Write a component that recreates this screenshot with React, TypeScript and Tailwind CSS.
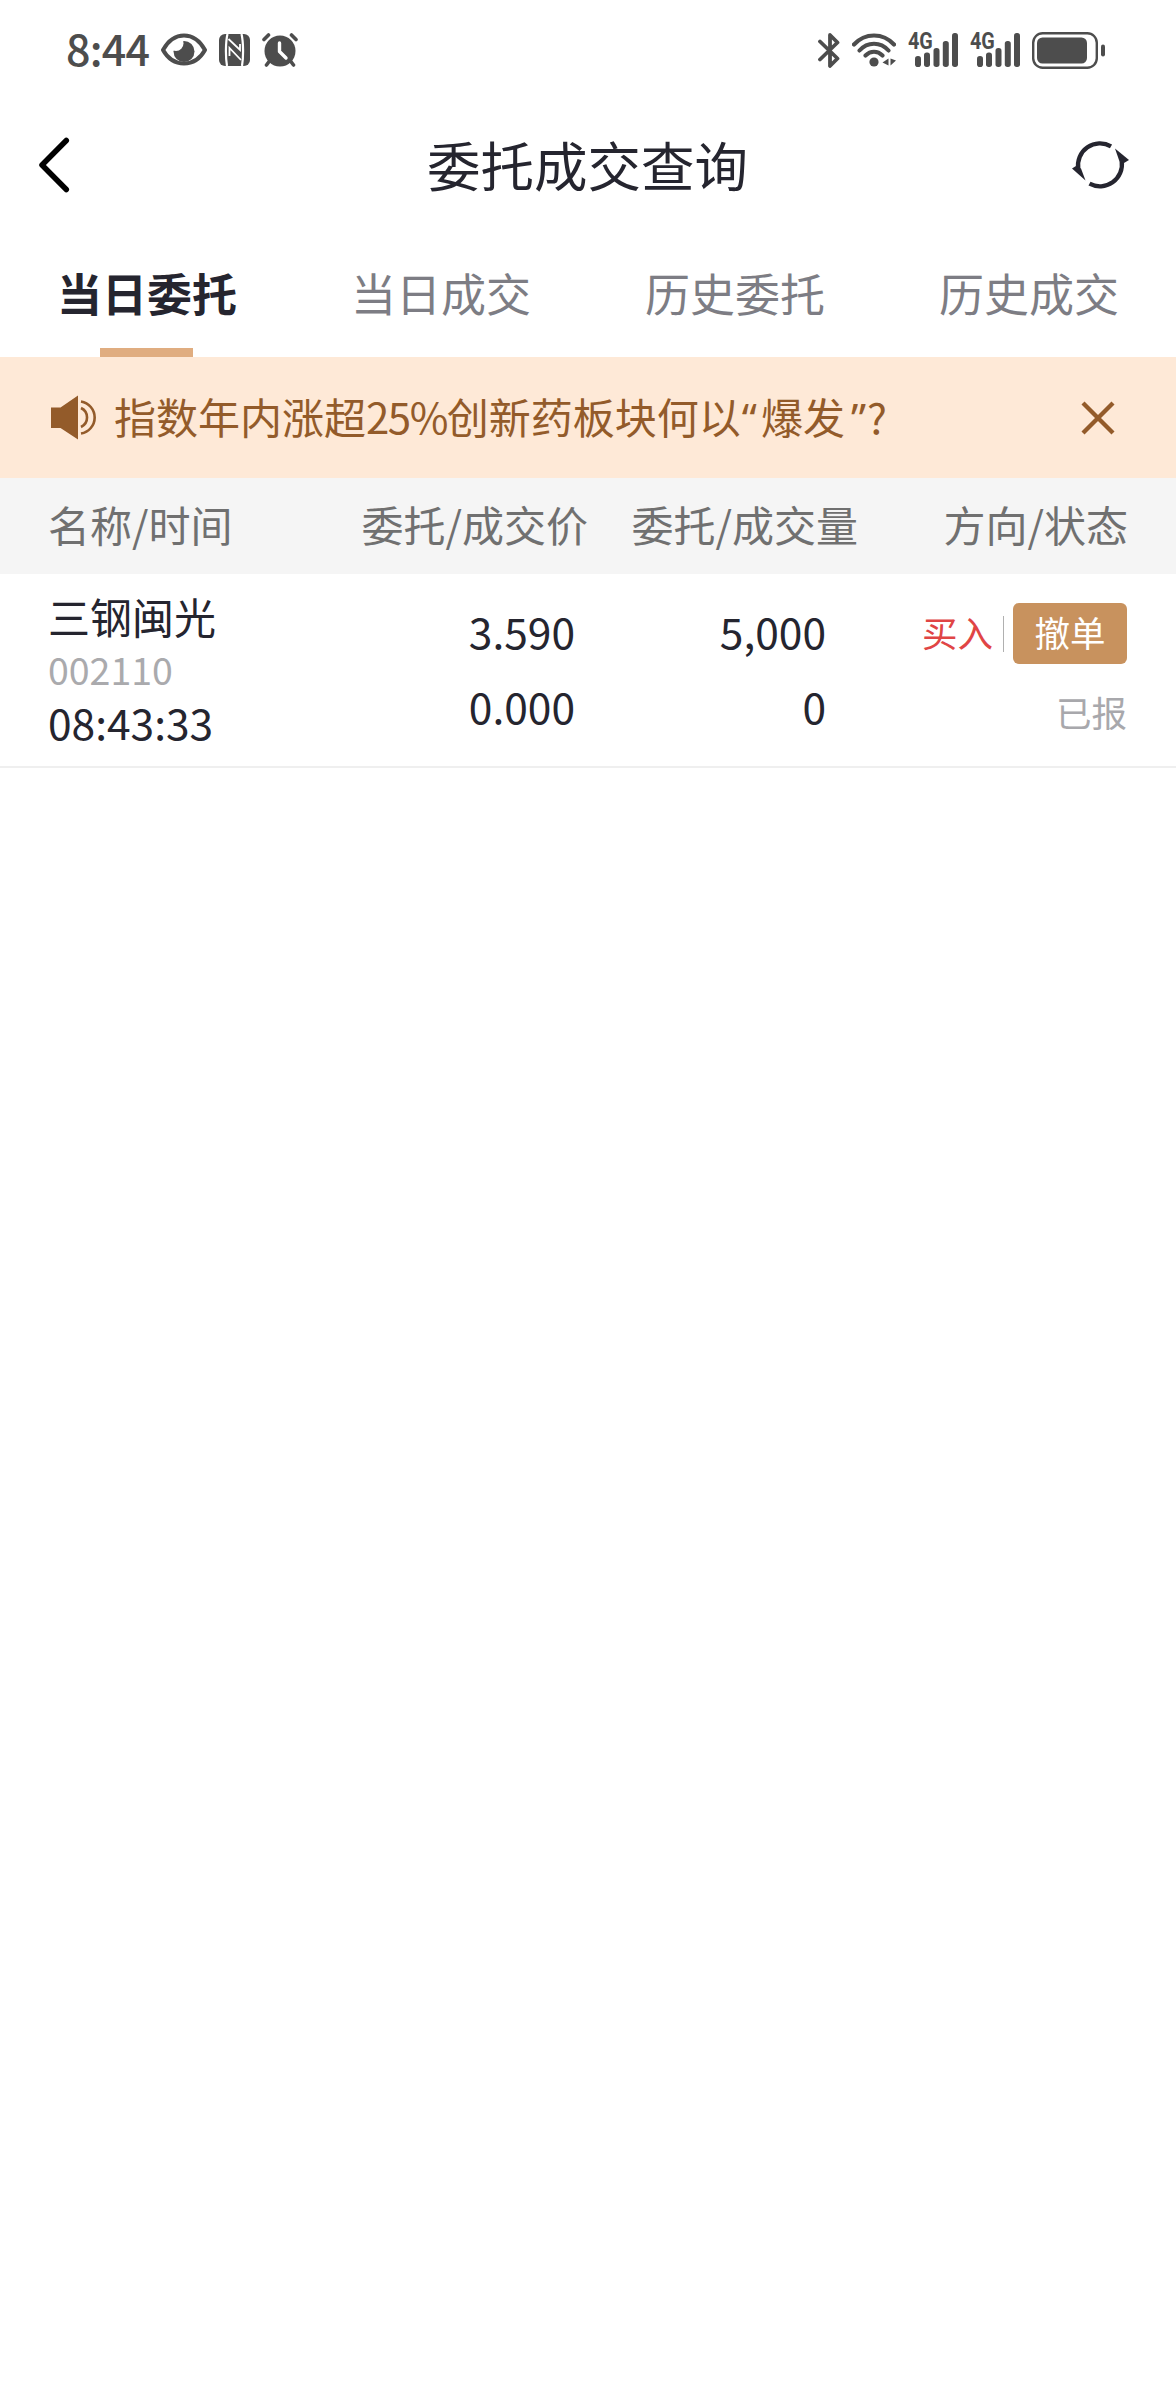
const tabs = ["当日委托", "当日成交", "历史委托", "历史成交"];

function EyeIcon() {
  return (
    <svg width="46" height="34" viewBox="0 0 46 34" fill="none">
      <circle cx="23" cy="18.500" r="10.500" fill="#4d4d4d" />
      <circle cx="15" cy="10.500" r="7.500" fill="#fff" />
      <path
        d="M2 17C7 8 14 2.500 23 2.500S39 8 44 17C39 26 32 30.500 23 30.500S7 26 2 17Z"
        stroke="#4d4d4d"
        strokeWidth="4"
        strokeLinejoin="round"
      />
    </svg>
  );
}

function NfcIcon() {
  return (
    <svg width="31" height="32" viewBox="0 0 31 32">
      <rect width="31" height="32" rx="6" fill="#4d4d4d" />
      <path d="M8.500 0C6.500 8 6.500 24 8 32" stroke="#fff" strokeWidth="2.200" fill="none" />
      <path d="M22.500 0C24.500 8 24.500 24 23 32" stroke="#fff" strokeWidth="2.200" fill="none" />
      <path d="M9.500 5L21 16V10M10.500 22V14L22 26" stroke="#fff" strokeWidth="1.800" fill="none" />
    </svg>
  );
}

function AlarmIcon() {
  return (
    <svg width="36" height="34" viewBox="0 0 36 34" fill="none" strokeLinecap="round">
      <circle cx="18" cy="18" r="15.500" fill="#4d4d4d" />
      <path d="M0 9L9 0M36 9L27 0" stroke="#fff" strokeWidth="3" />
      <path d="M2 6.500L6.500 2M34 6.500L29.500 2M7.500 28L4.500 32M28.500 28L31.500 32" stroke="#4d4d4d" strokeWidth="3.600" />
      <path d="M17.500 10V18.500L24 25" stroke="#fff" strokeWidth="3.400" strokeLinejoin="round" />
    </svg>
  );
}

function BluetoothIcon() {
  return (
    <svg width="22" height="35" viewBox="0 0 22 35" fill="none">
      <path
        d="M2 8.500L19.500 25.500L12 33V2L19.500 9.500L2 26.500"
        stroke="#4d4d4d"
        strokeWidth="3.800"
        strokeLinecap="round"
        strokeLinejoin="round"
      />
    </svg>
  );
}

function WifiIcon() {
  return (
    <svg width="44" height="34" viewBox="0 0 44 34" fill="none">
      <path
        d="M2 11.500C13 -0.500 31 -0.500 42 11.500M7.500 17.500C15.500 8.500 28.500 8.500 36.500 17.500M13.500 22.500C18.500 17.500 25.500 17.500 30.500 22.500"
        stroke="#4d4d4d"
        strokeWidth="4.100"
        strokeLinecap="round"
      />
      <circle cx="22" cy="29" r="4.600" fill="#4d4d4d" />
      <path d="M36.500 25.500V32.500L30.500 29.500ZM38.500 25.500V32.500L44 27.500Z" fill="#4d4d4d" />
    </svg>
  );
}

function SignalIcon() {
  return (
    <div className="relative h-[34px] w-[50px]">
      <span className="absolute top-0 left-0 origin-left scale-x-[0.86] font-['Roboto'] text-[23px] leading-[18px] font-bold text-[#4d4d4d]">
        4G
      </span>
      <svg width="50" height="34" viewBox="0 0 50 34" fill="#4d4d4d">
        <rect x="7" y="23" width="6" height="11" rx="2.800" />
        <rect x="16" y="19.500" width="6" height="14.500" rx="2.700" />
        <rect x="25.500" y="15" width="6" height="19" rx="2.700" />
        <rect x="34.800" y="8" width="6" height="26" rx="2.700" />
        <rect x="44" y="0" width="6" height="34" rx="2.700" />
      </svg>
    </div>
  );
}

function BatteryIcon() {
  return (
    <svg width="73" height="37" viewBox="0 0 73 37" fill="none">
      <rect x="1.200" y="1.200" width="63.600" height="34.600" rx="9.500" stroke="#4d4d4d" strokeWidth="2.400" />
      <rect x="5" y="5.500" width="50" height="26" rx="5.500" fill="#4d4d4d" />
      <rect x="69" y="12.500" width="4" height="12" rx="2" fill="#4d4d4d" />
    </svg>
  );
}

function StatusBar() {
  return (
    <div className="flex h-[100px] items-center pr-[71px] pl-[66px]">
      <span className="mb-1.5 w-[95px] text-[43px] leading-none font-medium tracking-[-0.8px] text-[#4d4d4d]">8:44</span>
      <EyeIcon />
      <div className="ml-3">
        <NfcIcon />
      </div>
      <div className="ml-3">
        <AlarmIcon />
      </div>
      <div className="ml-auto flex items-center">
        <BluetoothIcon />
        <div className="ml-3">
          <WifiIcon />
        </div>
        <div className="ml-3">
          <SignalIcon />
        </div>
        <div className="ml-3">
          <SignalIcon />
        </div>
        <div className="ml-3">
          <BatteryIcon />
        </div>
      </div>
    </div>
  );
}

function Header() {
  return (
    <header className="flex h-[130px] items-center justify-between pr-[46px] pl-[34px]">
      <button className="w-[71px]">
        <svg width="40" height="60" viewBox="0 0 40 60" fill="none">
          <path d="M32.300 5.500L8 30L32.300 54.500" stroke="#000" strokeWidth="5.500" strokeLinecap="round" strokeLinejoin="round" />
        </svg>
      </button>
      <h1 className="mb-[3px] text-[53.5px] leading-none">委托成交查询</h1>
      <button>
        <svg width="60" height="52" viewBox="0 0 60 52" fill="none">
          <path d="M41 7.300A22 22 0 0 0 8.300 30" stroke="#25252f" strokeWidth="4.300" />
          <path d="M51.700 22A22 22 0 0 1 19.500 44.700" stroke="#25252f" strokeWidth="4.300" />
          <path d="M45 9.500L59 21L54 24L49.500 22.500Z" fill="#25252f" />
          <path d="M15.500 41.500L2 29.500L6 27L11 29.500Z" fill="#25252f" />
        </svg>
      </button>
    </header>
  );
}

function Tabs() {
  return (
    <nav className="grid h-[127px] grid-cols-4">
      {tabs.map((tab, i) => (
        <button key={tab} className="flex flex-col items-center pt-[31px]">
          <span className={i === 0 ? "text-[45px] leading-[63px] font-bold" : "text-[45px] leading-[63px] text-[#7d7d84]"}>
            {tab}
          </span>
          {i === 0 && <span className="mt-auto mr-px h-[9px] w-[93px] bg-[#e0ad80]" />}
        </button>
      ))}
    </nav>
  );
}

function Notice() {
  return (
    <div className="flex h-[121px] items-center bg-[#fee9d7] pr-[60px] pl-[51px] text-[#935b2a]">
      <svg width="45" height="45" viewBox="0 0 45 45" fill="none">
        <path d="M0 12.500H9.500L27 0.500V44.500L9.500 33H0Z" fill="currentColor" />
        <path d="M30 6.500A16.200 16.200 0 0 1 30 38.500M30 13A10.500 10.500 0 0 1 30 32" stroke="currentColor" strokeWidth="2.600" />
      </svg>
      <p className="mb-px ml-[18px] flex-1 text-[42px] leading-none whitespace-nowrap">
        指数年内涨超<span className="tracking-[-1.5px]">25%</span>创新药板块何以
        <span className="mr-1 ml-px font-['Noto_Sans']">“</span>爆发
        <span className="mr-px ml-1.5 font-['Noto_Sans']">”</span>?
      </p>
      <svg width="36" height="36" viewBox="0 0 36 36" fill="none">
        <path d="M3 3L33 33M33 3L3 33" stroke="currentColor" strokeWidth="4.300" />
      </svg>
    </div>
  );
}

function OrderList() {
  return (
    <section>
      <div className="flex h-[96px] items-center px-12 pb-1 text-[42px] leading-none text-[#707070]">
        <span className="w-[240px]">名称/时间</span>
        <span className="w-[300px] text-right">委托/成交价</span>
        <span className="w-[270px] text-right">委托/成交量</span>
        <span className="flex-1 text-right">方向/状态</span>
      </div>
      <div className="flex h-[194px] border-b-2 border-[#efefef] bg-white pr-[49px] pl-12 text-[42.5px]">
        <div className="w-[240px] pt-[15px] leading-[53px]">
          <div className="pt-px text-[42px] leading-[52px]">三钢闽光</div>
          <div className="text-[37.5px] text-[#aaaaad]">002110</div>
          <div>08:43:33</div>
        </div>
        <div className="w-[287px] pt-[19px] text-right leading-[75px]">
          <div>3.590</div>
          <div>0.000</div>
        </div>
        <div className="w-[251px] pt-[19px] text-right leading-[75px]">
          <div>5,000</div>
          <div>0</div>
        </div>
        <div className="flex-1 pt-[29px] text-right text-[35.5px]">
          <div className="flex items-center justify-end">
            <span className="pb-[3px] leading-none text-[#e04545]">买入</span>
            <span className="mr-[9px] ml-[10px] h-9 w-px bg-[#b0b0b0]" />
            <button className="h-[61px] w-[114px] rounded-md bg-[#c8925e] pb-[3px] leading-none text-white">撤单</button>
          </div>
          <div className="mt-[21px] leading-[53px] text-[#a8a8ac]">已报</div>
        </div>
      </div>
    </section>
  );
}

export default function App() {
  return (
    <div className="min-h-[2400px] w-[1176px] bg-white font-['Noto_Sans_CJK_SC',sans-serif] text-[#25252f]">
      <StatusBar />
      <Header />
      <Tabs />
      <Notice />
      <div className="bg-[#f5f5f5]">
        <OrderList />
      </div>
    </div>
  );
}
